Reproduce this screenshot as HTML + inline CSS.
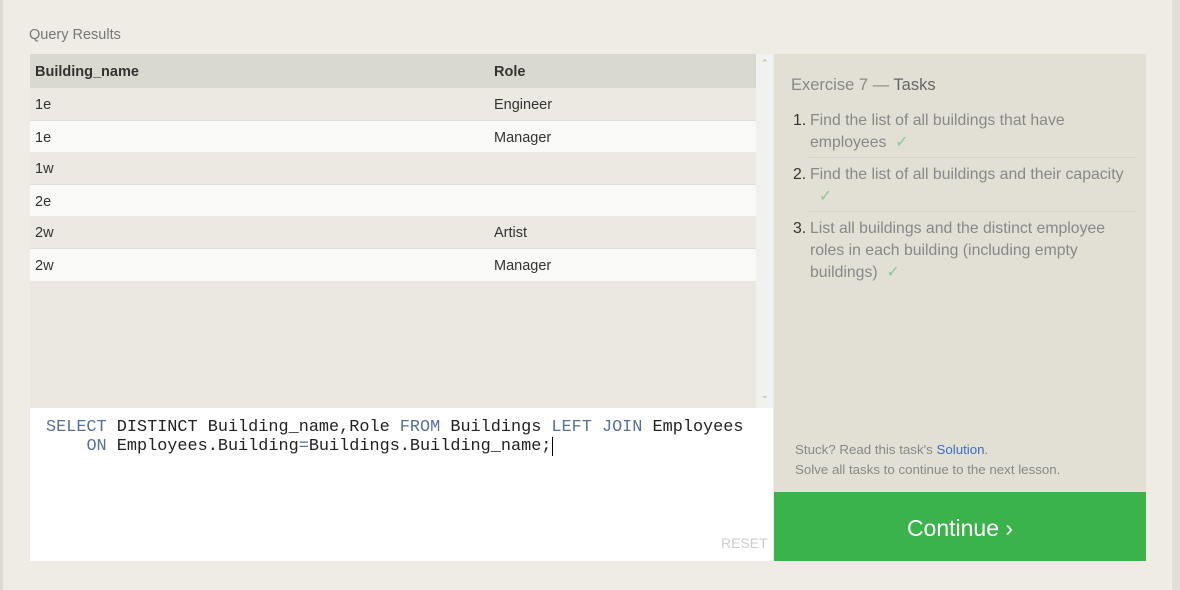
<!DOCTYPE html>
<html><head><meta charset="utf-8"><style>
body{margin:0;width:1180px;height:590px;background:#efece5;font-family:"Liberation Sans",sans-serif;position:relative;overflow:hidden}
.ls{position:absolute;left:0;top:0;width:3px;height:590px;background:#dcdad3}
.rs{position:absolute;left:1172px;top:0;width:8px;height:590px;background:#e2dfd8}
.title{position:absolute;left:29px;top:27px;font-size:14.5px;color:#777}
.tbl{position:absolute;left:30px;top:54px;width:726px;height:354px;background:#e9e7e0}
.row{position:absolute;left:0;width:726px;height:32px;font-size:14.5px;color:#333;line-height:34px}
.row span{position:absolute}
.c1{left:5px}.c2{left:464px}
.sb{position:absolute;left:756px;top:54px;width:17px;height:354px;background:#f1f1ef}
.ed{position:absolute;left:30px;top:408px;width:743px;height:153px;background:#fff}
pre{position:absolute;left:16px;top:10px;margin:0;font-family:"Liberation Mono",monospace;font-size:16.85px;line-height:19px;color:#222}
.k{color:#56709c}
.rp{position:absolute;left:774px;top:54px;width:372px;height:438px;background:#e2dfd5;color:#888}
.btn{position:absolute;left:774px;top:492px;width:372px;height:69px;background:#3ab44a;color:#fff;font-size:23px;text-align:center;line-height:72px}
.t{position:absolute;left:36px;width:330px;font-size:15.8px;line-height:22px;color:#888}
.t b{position:absolute;left:-17px;font-weight:normal;color:#333}
.ck{color:#8dc89a}
.hr{position:absolute;left:35px;width:328px;height:1px;background:#d6d3c9}
</style></head><body>
<div class="ls"></div><div class="rs"></div>
<div class="title">Query Results</div>
<div class="tbl">
<div class="row" style="top:0;height:34px;line-height:36px;background:#dad9cf;font-weight:bold"><span class="c1">Building_name</span><span class="c2">Role</span></div>
<div class="row" style="top:34px;background:#ebe9e2"><span class="c1">1e</span><span class="c2">Engineer</span></div>
<div class="row" style="top:66px;background:#f9f9f7;border-top:1px solid #e0ded7"><span class="c1">1e</span><span class="c2">Manager</span></div>
<div class="row" style="top:98px;background:#ebe9e2"><span class="c1">1w</span></div>
<div class="row" style="top:130px;background:#f9f9f7;border-top:1px solid #e0ded7"><span class="c1">2e</span></div>
<div class="row" style="top:162px;background:#ebe9e2"><span class="c1">2w</span><span class="c2">Artist</span></div>
<div class="row" style="top:194px;background:#f9f9f7;border-top:1px solid #e0ded7"><span class="c1">2w</span><span class="c2">Manager</span></div>
</div>
<div class="sb"><div style="position:absolute;left:5px;top:4px;font-size:9px;color:#aaa">&#8963;</div><div style="position:absolute;left:5px;top:336px;font-size:9px;color:#aaa">&#8964;</div></div>
<div class="ed"><pre><span class="k">SELECT</span> DISTINCT Building_name,Role <span class="k">FROM</span> Buildings <span class="k">LEFT JOIN</span> Employees
    <span class="k">ON</span> Employees.Building<span class="k">=</span>Buildings.Building_name;<span style="border-left:1.5px solid #000;margin-left:1px"></span></pre>
<div style="position:absolute;left:691px;top:127px;font-size:14px;color:#ccc">RESET</div></div>
<div class="rp">
<div style="position:absolute;left:17px;top:22px;font-size:16.5px;color:#888">Exercise 7 — <span style="color:#666">Tasks</span></div>
<div class="t" style="top:56px"><b>1.</b>Find the list of all buildings that have employees &nbsp;<span class="ck">✓</span></div>
<div class="hr" style="top:103px"></div>
<div class="t" style="top:110px"><b>2.</b>Find the list of all buildings and their capacity<br>&nbsp;&nbsp;<span class="ck">✓</span></div>
<div class="hr" style="top:157px"></div>
<div class="t" style="top:164px"><b>3.</b>List all buildings and the distinct employee roles in each building (including empty buildings) &nbsp;<span class="ck">✓</span></div>
<div style="position:absolute;left:21px;top:386px;font-size:13.3px;line-height:20px;color:#888">Stuck? Read this task's <span style="color:#3b6fc2">Solution</span>.<br>Solve all tasks to continue to the next lesson.</div>
</div>
<div class="btn">Continue ›</div>
</body></html>
